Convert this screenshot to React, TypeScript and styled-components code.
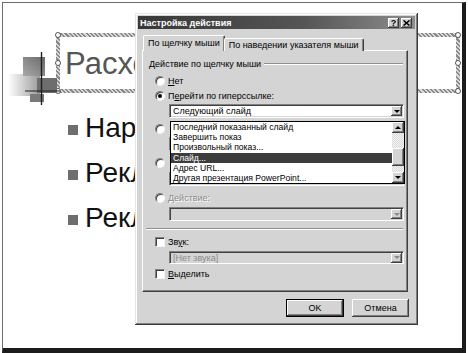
import React from "react";
import styled, { createGlobalStyle, css } from "styled-components";

const GlobalStyle = createGlobalStyle`
  html, body { margin: 0; padding: 0; background: #fff; }
  body { font-family: "Liberation Sans", Arial, sans-serif; }
  * { box-sizing: border-box; }
`;

const FACE = "#d4d4d4";

const Stage = styled.div`
  position: relative;
  width: 468px;
  height: 353px;
  overflow: hidden;
  background: #fff;
  padding: 2px 2px 0 2px;
`;

const SlideFrame = styled.div`
  position: relative;
  height: 351px;
  border-left: 1px solid #6c6c6c;
  border-top: 1px solid #6c6c6c;
  border-right: 4px solid #1c1c1c;
  border-bottom: 5px solid #1c1c1c;
  background: #fff;
  padding-top: 30px;
  display: flex;
  flex-direction: column;
`;

const TitleBox = styled.div`
  position: relative;
  margin-left: 53px;
  width: 404px;
  height: 60px;
  border: 4px solid transparent;
  border-image: repeating-linear-gradient(45deg, #8a8a8a 0 1.5px, #d8d8d8 1.5px 3px) 4;
  padding: 11px 0 0 5px;
`;

const TitleText = styled.div`
  font-size: 31px;
  line-height: 31px;
  color: #565656;
`;

const Handle = styled.span<{ $x: "l" | "r"; $y: "t" | "m" | "b" }>`
  position: absolute;
  width: 6px;
  height: 6px;
  border-radius: 50%;
  background: #fff;
  border: 1px solid #555;
  ${(p) => (p.$x === "l" ? "left: -5px;" : "right: -5px;")}
  ${(p) =>
    p.$y === "t" ? "top: -5px;" : p.$y === "m" ? "top: calc(50% - 3px);" : "bottom: -5px;"}
`;

const Logo = styled.svg`
  position: absolute;
  left: 5px;
  top: 47px;
  width: 56px;
  height: 58px;
`;

const BulletList = styled.ul`
  list-style: none;
  margin: 12px 0 0 0;
  padding: 0 0 0 65px;
  display: flex;
  flex-direction: column;
`;

const BulletRow = styled.li`
  display: flex;
  align-items: center;
  height: 45px;
`;

const BulletMark = styled.span`
  width: 10px;
  height: 10px;
  background: #6e6e6e;
  margin: 4px 7px 0 0;
  flex: none;
`;

const BulletText = styled.span`
  font-size: 28px;
  line-height: 45px;
  color: #111;
  white-space: nowrap;
`;

/* ---------- Dialog ---------- */

const Dialog = styled.div`
  position: absolute;
  left: 135px;
  top: 13px;
  width: 283px;
  height: 312px;
  background: ${FACE};
  padding: 3px;
  display: flex;
  flex-direction: column;
  box-shadow: inset -1px -1px 0 #3a3a3a, inset 1px 1px 0 #e6e6e6,
    inset -2px -2px 0 #808080, inset 2px 2px 0 #fff;
  font-size: 9px;
  color: #000;
`;

const TitleBar = styled.div`
  height: 13px;
  display: flex;
  align-items: center;
  padding: 0 3px 0 2px;
  background: linear-gradient(to right, #383838 0%, #555 60%, #8e8e8e 100%);
  color: #fff;
  font-weight: bold;
  font-size: 9px;
`;

const TitleLabel = styled.span`
  flex: 1;
  white-space: nowrap;
`;

const CaptionButton = styled.span<{ $gap?: boolean }>`
  width: 11px;
  height: 10px;
  margin-left: ${(p) => (p.$gap ? "2px" : "0")};
  background: ${FACE};
  box-shadow: inset -1px -1px 0 #3a3a3a, inset 1px 1px 0 #fff, inset -2px -2px 0 #808080;
  color: #000;
  font-weight: bold;
  font-size: 9px;
  line-height: 10px;
  display: flex;
  align-items: center;
  justify-content: center;
`;

const Body = styled.div`
  flex: 1;
  padding: 6px 7px 0 4px;
  display: flex;
  flex-direction: column;
`;

const TabsRow = styled.div`
  display: flex;
  align-items: flex-end;
  height: 16px;
  padding-left: 1px;
  position: relative;
  z-index: 1;
  margin-bottom: -1px;
`;

const Tab = styled.div<{ $active?: boolean }>`
  height: ${(p) => (p.$active ? "16px" : "13px")};
  padding: ${(p) => (p.$active ? "2px 4px 0 4px" : "1px 4px 0 4px")};
  background: ${FACE};
  border-top: 1px solid #fff;
  border-left: 1px solid #fff;
  border-right: 1px solid #404040;
  box-shadow: inset -1px 0 0 #808080;
  border-radius: 2px 2px 0 0;
  white-space: nowrap;
  line-height: 11px;
  margin-left: ${(p) => (p.$active ? "0" : "-1px")};
`;

const Panel = styled.div`
  position: relative;
  height: 242px;
  border-top: 1px solid #fff;
  border-left: 1px solid #fff;
  border-right: 1px solid #404040;
  border-bottom: 1px solid #404040;
  box-shadow: inset -1px -1px 0 #808080;
  padding: 7px 4px 0 3px;
  display: flex;
  flex-direction: column;
`;

const GroupBox = styled.div`
  display: flex;
  flex-direction: column;
  padding-bottom: 8px;
  border-bottom: 1px solid #fff;
  box-shadow: inset 0 -1px 0 #909090;
`;

const GroupHeader = styled.div`
  display: flex;
  align-items: center;
  height: 11px;
  padding-left: 3px;
  gap: 3px;
`;

const EtchedLine = styled.span`
  flex: 1;
  height: 2px;
  border-top: 1px solid #909090;
  border-bottom: 1px solid #fff;
`;

const OptionRow = styled.div<{ $top: number; $disabled?: boolean }>`
  display: flex;
  align-items: center;
  height: 11px;
  margin-top: ${(p) => p.$top}px;
  padding-left: 9px;
  gap: 3px;
  white-space: nowrap;
  color: ${(p) => (p.$disabled ? "#8a8a8a" : "#000")};
  text-shadow: ${(p) => (p.$disabled ? "1px 1px 0 #fff" : "none")};
`;

const Radio = styled.span<{ $checked?: boolean }>`
  position: relative;
  width: 10px;
  height: 10px;
  flex: none;
  border-radius: 50%;
  background: #fff;
  border: 1px solid;
  border-color: #808080 #f4f4f4 #f4f4f4 #808080;
  box-shadow: inset 1px 1px 0 #404040;
  ${(p) =>
    p.$checked &&
    css`
      &::after {
        content: "";
        position: absolute;
        left: 2px;
        top: 2px;
        width: 4px;
        height: 4px;
        border-radius: 50%;
        background: #000;
      }
    `}
`;

const Checkbox = styled.span`
  width: 10px;
  height: 10px;
  flex: none;
  background: #fff;
  border: 1px solid;
  border-color: #808080 #f4f4f4 #f4f4f4 #808080;
  box-shadow: inset 1px 1px 0 #404040;
`;

const Key = styled.u`
  text-decoration: underline;
`;

const SelectBox = styled.div<{ $top: number; $disabled?: boolean; $h?: number }>`
  display: flex;
  align-items: center;
  height: ${(p) => p.$h ?? 14}px;
  margin: ${(p) => p.$top}px -1px 0 23px;
  background: ${(p) => (p.$disabled ? FACE : "#fff")};
  border: 1px solid;
  border-color: #808080 #fff #fff #808080;
  box-shadow: inset 1px 1px 0 #404040, inset -1px -1px 0 ${FACE};
  padding: 1px 1px 1px 3px;
  color: ${(p) => (p.$disabled ? "#8a8a8a" : "#000")};
  white-space: nowrap;
`;

const SelectText = styled.span`
  flex: 1;
  line-height: 10px;
`;

const ArrowButton = styled.span<{ $disabled?: boolean }>`
  width: 11px;
  height: 10px;
  flex: none;
  background: ${FACE};
  box-shadow: inset -1px -1px 0 #404040, inset 1px 1px 0 #fff, inset -2px -2px 0 #808080;
  display: flex;
  align-items: center;
  justify-content: center;
  &::after {
    content: "";
    border-left: 3px solid transparent;
    border-right: 3px solid transparent;
    border-top: 3px solid ${(p) => (p.$disabled ? "#8a8a8a" : "#000")};
  }
`;

const InputRow = styled.div`
  display: flex;
  gap: 4px;
  margin: 3px -1px 0 23px;
  height: 14px;
`;

const TextInput = styled.div`
  flex: 1;
  background: #fff;
  border: 1px solid;
  border-color: #808080 #fff #fff #808080;
`;

const SmallButton = styled.span`
  width: 50px;
  background: ${FACE};
  box-shadow: inset -1px -1px 0 #404040, inset 1px 1px 0 #fff;
`;

const DropList = styled.div`
  position: absolute;
  left: 27px;
  top: 70px;
  width: 235px;
  height: 63px;
  background: #fff;
  border: 1px solid #000;
  display: flex;
  z-index: 2;
`;

const ListItems = styled.div`
  flex: 1;
  display: flex;
  flex-direction: column;
`;

const ListItem = styled.div<{ $selected?: boolean }>`
  height: 10.2px;
  line-height: 10.2px;
  font-size: 8.6px;
  padding-left: 2px;
  white-space: nowrap;
  overflow: hidden;
  background: ${(p) => (p.$selected ? "#3c3c3c" : "transparent")};
  color: ${(p) => (p.$selected ? "#fff" : "#000")};
`;

const ScrollBar = styled.div`
  width: 12px;
  display: flex;
  flex-direction: column;
  background: repeating-conic-gradient(#f2f2f2 0 25%, #dadada 0 50%) 0 0 / 2px 2px;
`;

const ScrollButton = styled.span<{ $up?: boolean }>`
  height: 11px;
  flex: none;
  background: ${FACE};
  box-shadow: inset -1px -1px 0 #404040, inset 1px 1px 0 #fff, inset -2px -2px 0 #808080;
  display: flex;
  align-items: center;
  justify-content: center;
  &::after {
    content: "";
    border-left: 3px solid transparent;
    border-right: 3px solid transparent;
    ${(p) => (p.$up ? "border-bottom: 3px solid #000;" : "border-top: 3px solid #000;")}
  }
`;

const ScrollTrack = styled.div`
  flex: 1;
`;

const ScrollThumb = styled.div`
  margin-top: 15px;
  height: 18px;
  background: ${FACE};
  box-shadow: inset -1px -1px 0 #404040, inset 1px 1px 0 #fff, inset -2px -2px 0 #808080;
`;

const ButtonRow = styled.div`
  display: flex;
  justify-content: flex-end;
  gap: 8px;
  margin: 7px -1px 0 0;
`;

const PushButton = styled.button<{ $default?: boolean; $w: number }>`
  width: ${(p) => p.$w}px;
  height: 18px;
  padding: 0;
  border: none;
  font: 9px "Liberation Sans", Arial, sans-serif;
  color: #000;
  background: ${FACE};
  box-shadow: ${(p) =>
    p.$default
      ? "inset 0 0 0 1px #000, inset -2px -2px 0 #404040, inset 2px 2px 0 #fff, inset -3px -3px 0 #808080"
      : "inset -1px -1px 0 #404040, inset 1px 1px 0 #fff, inset -2px -2px 0 #808080"};
`;

const listItems = [
  "Последний показанный слайд",
  "Завершить показ",
  "Произвольный показ...",
  "Слайд...",
  "Адрес URL...",
  "Другая презентация PowerPoint...",
];

export default function App() {
  return (
    <>
      <GlobalStyle />
      <Stage>
        <SlideFrame>
          <TitleBox>
            <TitleText>Расходы</TitleText>
            <Handle $x="l" $y="t" />
            <Handle $x="l" $y="m" />
            <Handle $x="l" $y="b" />
            <Handle $x="r" $y="t" />
            <Handle $x="r" $y="m" />
            <Handle $x="r" $y="b" />
          </TitleBox>
          <Logo viewBox="8 50 56 58">
            <defs>
              <linearGradient id="fade" x1="0" x2="1" y1="0" y2="0">
                <stop offset="0" stopColor="#fff" />
                <stop offset="1" stopColor="#9a9a9a" />
              </linearGradient>
              <linearGradient id="sq" x1="0" x2="1" y1="1" y2="0">
                <stop offset="0" stopColor="#a8a8a8" />
                <stop offset="1" stopColor="#6a6a6a" />
              </linearGradient>
            </defs>
            <rect x="8" y="74" width="32" height="22" fill="url(#fade)" />
            <rect x="23" y="57" width="22" height="19" fill="url(#sq)" />
            <rect x="37" y="78" width="20" height="15" fill="#6e6e6e" />
            <rect x="30" y="94" width="14" height="8" fill="#7a7a7a" />
            <line x1="41.5" y1="52" x2="41.5" y2="105" stroke="#1e1e1e" strokeWidth="1.4" />
            <line x1="25" y1="91" x2="60" y2="91" stroke="#1e1e1e" strokeWidth="1.2" />
          </Logo>
          <BulletList>
            <BulletRow>
              <BulletMark />
              <BulletText>Наружная реклама</BulletText>
            </BulletRow>
            <BulletRow>
              <BulletMark />
              <BulletText>Реклама на ТВ</BulletText>
            </BulletRow>
            <BulletRow>
              <BulletMark />
              <BulletText>Реклама в прессе</BulletText>
            </BulletRow>
          </BulletList>
        </SlideFrame>

        <Dialog>
          <TitleBar>
            <TitleLabel>Настройка действия</TitleLabel>
            <CaptionButton>?</CaptionButton>
            <CaptionButton $gap>
              <svg width="7" height="6" viewBox="0 0 7 6">
                <path d="M0.5 0.5 L6.5 5.5 M6.5 0.5 L0.5 5.5" stroke="#000" strokeWidth="1.6" />
              </svg>
            </CaptionButton>
          </TitleBar>
          <Body>
            <TabsRow>
              <Tab $active>По щелчку мыши</Tab>
              <Tab>По наведении указателя мыши</Tab>
            </TabsRow>
            <Panel>
              <GroupBox>
                <GroupHeader>
                  <span>Действие по щелчку мыши</span>
                  <EtchedLine />
                </GroupHeader>
                <OptionRow $top={6}>
                  <Radio />
                  <span>
                    <Key>Н</Key>ет
                  </span>
                </OptionRow>
                <OptionRow $top={4}>
                  <Radio $checked />
                  <span>
                    П<Key>е</Key>рейти по гиперссылке:
                  </span>
                </OptionRow>
                <SelectBox $top={3}>
                  <SelectText>Следующий слайд</SelectText>
                  <ArrowButton />
                </SelectBox>
                <OptionRow $top={5}>
                  <Radio />
                </OptionRow>
                <InputRow>
                  <TextInput />
                  <SmallButton />
                </InputRow>
                <OptionRow $top={6}>
                  <Radio />
                </OptionRow>
                <SelectBox $top={4} $disabled>
                  <SelectText />
                  <ArrowButton $disabled />
                </SelectBox>
                <OptionRow $top={6} $disabled>
                  <Radio />
                  <span>
                    <Key>Д</Key>ействие:
                  </span>
                </OptionRow>
                <SelectBox $top={4} $disabled>
                  <SelectText />
                  <ArrowButton $disabled />
                </SelectBox>
              </GroupBox>
              <OptionRow $top={6}>
                <Checkbox />
                <span>
                  Зв<Key>у</Key>к:
                </span>
              </OptionRow>
              <SelectBox $top={4} $disabled $h={13}>
                <SelectText>[Нет звука]</SelectText>
                <ArrowButton $disabled />
              </SelectBox>
              <OptionRow $top={4}>
                <Checkbox />
                <span>
                  <Key>В</Key>ыделить
                </span>
              </OptionRow>
              <DropList>
                <ListItems>
                  {listItems.map((t) => (
                    <ListItem key={t} $selected={t === "Слайд..."}>
                      {t}
                    </ListItem>
                  ))}
                </ListItems>
                <ScrollBar>
                  <ScrollButton $up />
                  <ScrollTrack>
                    <ScrollThumb />
                  </ScrollTrack>
                  <ScrollButton />
                </ScrollBar>
              </DropList>
            </Panel>
            <ButtonRow>
              <PushButton $default $w={58}>
                OK
              </PushButton>
              <PushButton $w={57}>Отмена</PushButton>
            </ButtonRow>
          </Body>
        </Dialog>
      </Stage>
    </>
  );
}
